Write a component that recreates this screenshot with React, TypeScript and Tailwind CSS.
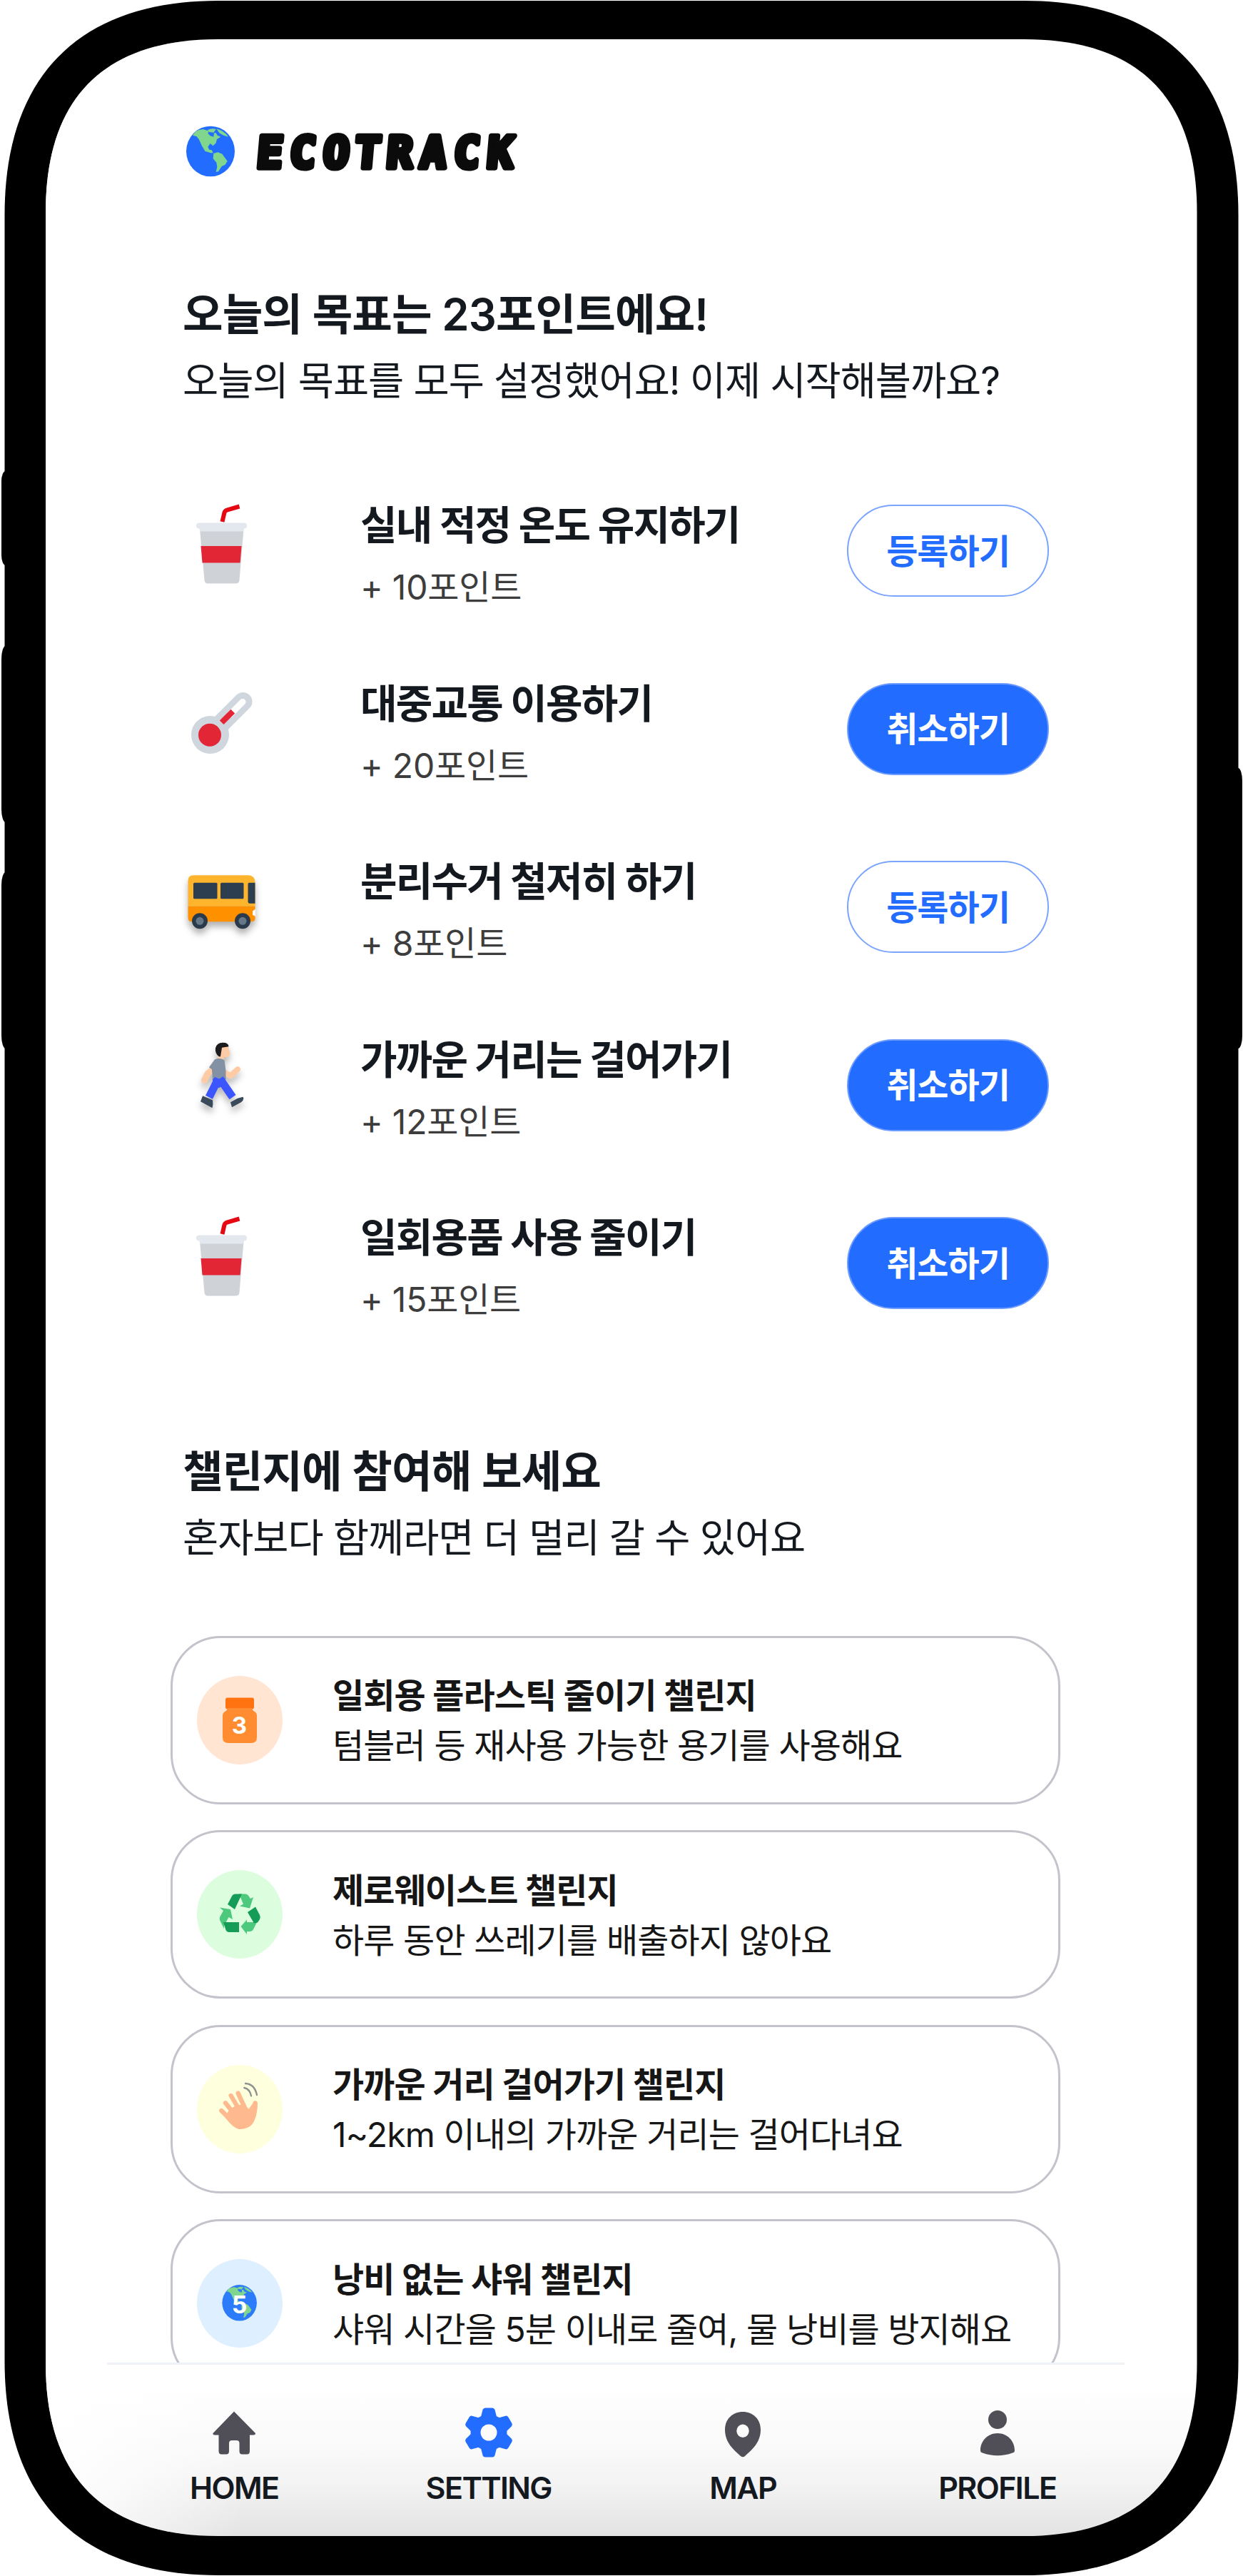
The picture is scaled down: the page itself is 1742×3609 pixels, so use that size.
import React from "react";

const INNER =
  "M64 297C64 137 146 55 306 55H1435.5C1595.5 55 1677.5 137 1677.5 297V3311C1677.5 3471 1595.5 3553 1435.5 3553H306C146 3553 64 3471 64 3311Z";
const OUTER =
  "M6.5 301C6.5 106 111.500 1 306.500 1H1435.500C1630.500 1 1735.500 106 1735.500 301V3308C1735.500 3503 1630.500 3608 1435.500 3608H306.500C111.500 3608 6.500 3503 6.500 3308Z";

function PhoneFrame() {
  return (
    <svg className="absolute inset-0" width="1742" height="3609" viewBox="0 0 1742 3609" aria-hidden="true">
      <defs>
        <linearGradient id="floor" x1="0" y1="3340" x2="0" y2="3553" gradientUnits="userSpaceOnUse">
          <stop offset="0" stopColor="#ffffff" />
          <stop offset="0.4" stopColor="#fafafa" />
          <stop offset="0.65" stopColor="#f3f3f3" />
          <stop offset="0.85" stopColor="#eaeaea" />
          <stop offset="1" stopColor="#e3e3e3" />
        </linearGradient>
        <linearGradient id="edge" x1="64" y1="0" x2="340" y2="0" gradientUnits="userSpaceOnUse">
          <stop offset="0.15" stopColor="#ffffff" stopOpacity="0.85" />
          <stop offset="1" stopColor="#ffffff" stopOpacity="0" />
        </linearGradient>
      </defs>
      <rect x="2" y="660" width="20" height="132" rx="6" ry="14" />
      <rect x="2" y="905" width="20" height="247" rx="6" ry="18" />
      <rect x="2" y="1222" width="20" height="247" rx="6" ry="18" />
      <rect x="1721" y="1076" width="20" height="393" rx="6" ry="18" />
      <path d={OUTER} fill="#000" />
      <path d={INNER} fill="url(#floor)" />
      <path d={INNER} fill="url(#edge)" />
    </svg>
  );
}

function Continents() {
  return (
    <g fill="#80d68c">
      <path d="M60 92L72 76L84 70L104 66L128 74L124 84L134 94L148 98L150 82L158 82L164 92L178 98L162 108L158 124L146 136L134 126L124 140L130 152L140 154L146 166L136 166L112 158L98 134L86 108L76 96Z" />
      <path d="M122 70Q140 60 158 66L148 80L130 78Z" />
      <path d="M160 64Q192 72 210 98L190 92L172 82Z" />
      <path d="M148 168L166 163L184 170L206 200L196 216L182 222L168 244L158 246L163 224L160 206L146 190Z" />
    </g>
  );
}

function Globe() {
  return (
    <svg width="70" height="72" viewBox="30 51 210 216" aria-hidden="true">
      <ellipse cx="135" cy="159" rx="102" ry="106" fill="#226dff" />
      <Continents />
    </svg>
  );
}

function Wordmark() {
  return (
    <svg width="400" height="84" viewBox="0 0 400 84">
      <text
        transform="skewX(-5)"
        x="14 60 107 151 196 243 290 337"
        y="65"
        fontFamily="DejaVu Sans Mono"
        fontWeight="700"
        fontSize="61"
        fill="#0b0b0b"
        stroke="#0b0b0b"
        strokeWidth="7.5"
        strokeLinejoin="round"
      >
        ECOTRACK
      </text>
    </svg>
  );
}

function Cup() {
  return (
    <svg width="116" height="116" viewBox="252 705 116 116" aria-hidden="true">
      <path d="M311.500 731L314.500 718Q315.500 715.500 318 714.700L335.500 709.500" fill="none" stroke="#e50914" strokeWidth="6" />
      <path d="M280 741H341.500L335.500 813Q335 817.500 330 817.500H291.500Q287 817.500 286.500 813Z" fill="#cfd3d8" />
      <path d="M281.500 765H338.500L336.600 788.500H283.500Z" fill="#e32636" />
      <rect x="275" y="732.500" width="71" height="8" rx="4" fill="#e3e8ee" />
      <path d="M278.500 738H342.500L340.500 744.500H280.500Z" fill="#e3e8ee" />
    </svg>
  );
}

function Thermometer() {
  return (
    <svg width="116" height="116" viewBox="252 954.600 116 116" aria-hidden="true">
      <circle cx="294.500" cy="1029" r="26.500" fill="#d0d6de" />
      <path d="M294 1029L340.500 982.500" stroke="#d0d6de" strokeWidth="26" strokeLinecap="round" />
      <path d="M322 1001L340 983" stroke="#fff" strokeWidth="9" strokeLinecap="round" />
      <circle cx="294" cy="1029.300" r="16" fill="#e32636" />
      <path d="M313.500 1009L323.500 999" stroke="#e32636" strokeWidth="8" strokeLinecap="square" />
    </svg>
  );
}

function Bus() {
  return (
    <svg className="drop-shadow-[0_7px_5px_rgba(0,0,0,0.3)]" width="116" height="116" viewBox="252 1204.200 116 116" aria-hidden="true">
      <path d="M263.500 1270V1234Q263.500 1226.500 271 1226.500H348Q357.500 1226.500 357.500 1237V1270Z" fill="#ffb42e" />
      <path d="M263.500 1270H357.500V1287Q357.500 1291.500 352 1291.500H269Q263.500 1291.500 263.500 1286Z" fill="#ff9000" />
      <rect x="271" y="1237" width="33.500" height="22.500" rx="1.500" fill="#2c3e50" />
      <rect x="309" y="1237" width="32.500" height="22.500" rx="1.500" fill="#2c3e50" />
      <path d="M357.500 1237H349Q347.500 1237 347.500 1239V1263Q347.500 1266 350 1266H357.500Z" fill="#2c3e50" />
      <path d="M358 1274L354 1276.500V1282L358 1284Z" fill="#fff" />
      <circle cx="280" cy="1290.500" r="11" fill="#2a3a4b" />
      <circle cx="340" cy="1290.500" r="11" fill="#2a3a4b" />
      <circle cx="280" cy="1290.500" r="5.500" fill="#66778a" />
      <circle cx="340" cy="1290.500" r="5.500" fill="#66778a" />
    </svg>
  );
}

function Walker() {
  return (
    <svg className="drop-shadow-[0_7px_5px_rgba(0,0,0,0.28)]" width="116" height="116" viewBox="252 1453.800 116 116" aria-hidden="true">
      <path d="M305 1468Q306 1462 313 1462Q321 1463 321 1470L322.500 1476Q321 1482 314 1481L313 1486H306Z" fill="#ffcba4" />
      <path d="M307 1480Q301 1476 302 1468Q304 1460 313 1460.500Q320 1460.500 320.500 1466L311 1467.500Q310 1474 309 1480Z" fill="#1c1c1e" />
      <path d="M301 1496L291 1504L286.500 1513" fill="none" stroke="#ffcba4" strokeWidth="9" strokeLinecap="round" strokeLinejoin="round" />
      <path d="M316 1503L323 1507L333 1498" fill="none" stroke="#ffcba4" strokeWidth="8" strokeLinecap="round" strokeLinejoin="round" />
      <path d="M301 1484Q308 1481 314.500 1485L316.500 1500V1512H298L297 1498L293 1495Z" fill="#8391a5" />
      <path d="M306 1511L293 1537" stroke="#3b55ff" strokeWidth="11" />
      <path d="M308 1511L326 1537" stroke="#3b55ff" strokeWidth="11" />
      <path d="M298 1511H316L314 1519L307 1524L298 1518Z" fill="#3b55ff" />
      <path d="M284 1535L298 1541Q299 1547 297.500 1552L281 1543Z" fill="#3b4a5a" />
      <path d="M323 1544L333 1538.500L340.500 1536.500Q343 1540 338 1544L325 1551Z" fill="#3b4a5a" />
    </svg>
  );
}

function JarBadge() {
  return (
    <svg width="120" height="124" viewBox="0 0 120 124" aria-hidden="true">
      <ellipse cx="60" cy="62" rx="60" ry="62" fill="#ffe5d2" />
      <rect x="40" y="30.500" width="40" height="16" rx="3" fill="#ff7410" />
      <path d="M43 45H77Q78 49 81 50Q84 52 84 56V86Q84 94 76 94H44Q36 94 36 86V56Q36 52 39 50Q42 49 43 45Z" fill="#ff8c30" />
      <text x="59.500" y="81" textAnchor="middle" fontFamily="Inter" fontWeight="700" fontSize="33" fill="#fff">3</text>
    </svg>
  );
}

function RecycleBadge() {
  return (
    <svg width="120" height="124" viewBox="0 0 120 124" aria-hidden="true">
      <ellipse cx="60" cy="62" rx="60" ry="62" fill="#ddfddf" />
      <g fill="#4cc97d">
        <path d="M59 33.500H68Q71 33.500 73 37L75 40L79 38L74 53.500L60 50.500L65 47.500Z" />
        <path d="M32 52.500L47 55L50 69L44.500 66L38 78L38 82L32 70Q31 67 33 64L37 57Z" />
        <path d="M61.500 79L70 69.500V73H84L79 83Q77.500 86 74 86H70V90Z" />
      </g>
      <g fill="#159d58">
        <path d="M43 48L49 36.500Q50.500 33.500 54 33.500H63L53 55Z" />
        <path d="M37 73H59V87H45Q42 87 40.500 84Z" />
        <path d="M71 59L82 51.500L88 63Q89.500 66 88 69L85 73.500L80 74.500Z" />
      </g>
    </svg>
  );
}

function WaveBadge() {
  return (
    <svg width="120" height="124" viewBox="20 158 360 372" aria-hidden="true">
      <ellipse cx="200" cy="344" rx="180" ry="186" fill="#feffdd" />
      <g fill="none" stroke="#ffb98e" strokeLinecap="round" strokeWidth="19">
        <path d="M123 350L165 392" />
        <path d="M140 318L180 368" />
        <path d="M163 287L200 350" />
        <path d="M193 277L222 340" />
        <path d="M265 318Q266 350 250 380" />
      </g>
      <path d="M138 378L152 352L180 330L216 322L238 343L256 318L275 318Q274 380 252 408Q232 430 196 428Q172 424 138 378Z" fill="#ffb98e" />
      <g fill="none" stroke="#8c918f" strokeWidth="7" strokeLinecap="round">
        <path d="M224 236Q262 238 272 284" />
        <path d="M219 254Q243 260 248 288" />
      </g>
    </svg>
  );
}

function EarthBadge() {
  return (
    <svg width="120" height="124" viewBox="0 0 120 124" aria-hidden="true">
      <ellipse cx="60" cy="62" rx="60" ry="62" fill="#deefff" />
      <g transform="translate(27.500 23.500) scale(0.238)">
        <ellipse cx="135" cy="159" rx="102" ry="106" fill="#2b7bfa" />
        <Continents />
      </g>
      <text x="59.500" y="75.500" textAnchor="middle" fontFamily="Inter" fontWeight="700" fontSize="34" fill="#fff">5</text>
    </svg>
  );
}

function HomeIcon() {
  return (
    <svg width="72" height="72" viewBox="292 3372 72 72" aria-hidden="true">
      <path d="M328 3378.500L358 3409Q358 3411.500 355 3411.500H350V3434Q350 3438.500 346 3438.500H339.500Q335.500 3438.500 335.500 3434V3423Q335.500 3419 331.500 3419H325Q321 3419 321 3423V3434Q321 3438.500 317 3438.500H310.500Q306.500 3438.500 306.500 3434V3411.500H301Q298 3411.500 298.500 3409Z" fill="#504f58" />
    </svg>
  );
}

function GearIcon() {
  return (
    <svg width="72" height="72" viewBox="-36 -36 72 72" aria-hidden="true">
      <mask id="hub">
        <rect x="-36" y="-36" width="72" height="72" fill="#fff" />
        <circle r="11.500" fill="#000" />
      </mask>
      <g mask="url(#hub)" fill="#226dff">
        <circle r="25.500" />
        <path id="tooth" d="M-5 -34.500H5Q7.500 -34.500 8.500 -32L11.500 -20V20L8.500 32Q7.500 34.500 5 34.500H-5Q-7.500 34.500 -8.500 32L-11.500 20V-20L-8.500 -32Q-7.500 -34.500 -5 -34.500Z" />
        <use href="#tooth" transform="rotate(60)" />
        <use href="#tooth" transform="rotate(120)" />
      </g>
    </svg>
  );
}

function PinIcon() {
  return (
    <svg width="72" height="72" viewBox="1005 3372 72 72" aria-hidden="true">
      <path
        fillRule="evenodd"
        d="M1041 3379C1055 3379 1066 3389 1066 3404C1066 3422 1054 3432 1044 3441Q1041 3443.500 1038 3441C1028 3432 1016 3422 1016 3404C1016 3389 1027 3379 1041 3379ZM1041 3396.500A8.700 9.200 0 1 0 1041 3415A8.700 9.200 0 1 0 1041 3396.500Z"
        fill="#504f58"
      />
    </svg>
  );
}

function PersonIcon() {
  return (
    <svg width="72" height="72" viewBox="1361 3372 72 72" aria-hidden="true">
      <circle cx="1397" cy="3390" r="13" fill="#504f58" />
      <path d="M1397 3409C1411 3409 1421 3420 1421 3433Q1421 3436 1418 3436.500Q1397 3444 1376 3436.500Q1373 3436 1373 3433C1373 3420 1383 3409 1397 3409Z" fill="#504f58" />
    </svg>
  );
}

const goals = [
  { Icon: Cup, title: "실내 적정 온도 유지하기", points: 10, active: false },
  { Icon: Thermometer, title: "대중교통 이용하기", points: 20, active: true },
  { Icon: Bus, title: "분리수거 철저히 하기", points: 8, active: false },
  { Icon: Walker, title: "가까운 거리는 걸어가기", points: 12, active: true },
  { Icon: Cup, title: "일회용품 사용 줄이기", points: 15, active: true },
];

const challenges = [
  { Badge: JarBadge, title: "일회용 플라스틱 줄이기 챌린지", text: "텀블러 등 재사용 가능한 용기를 사용해요" },
  { Badge: RecycleBadge, title: "제로웨이스트 챌린지", text: "하루 동안 쓰레기를 배출하지 않아요" },
  { Badge: WaveBadge, title: "가까운 거리 걸어가기 챌린지", text: "1~2km 이내의 가까운 거리는 걸어다녀요" },
  { Badge: EarthBadge, title: "낭비 없는 샤워 챌린지", text: "샤워 시간을 5분 이내로 줄여, 물 낭비를 방지해요" },
];

const tabs = [
  { Icon: HomeIcon, label: "HOME" },
  { Icon: GearIcon, label: "SETTING" },
  { Icon: PinIcon, label: "MAP" },
  { Icon: PersonIcon, label: "PROFILE" },
];

function SectionTitle({ title, text }: { title: string; text: string }) {
  return (
    <div className="pl-[17px] pt-[3px] text-[#14181f]">
      <h2 className="text-[61.5px] font-semibold leading-[96px] tracking-[-0.9px]">{title}</h2>
      <p className="text-[54.5px] leading-[88px] tracking-[-1px]">{text}</p>
    </div>
  );
}

export default function App() {
  return (
    <div className="relative h-[3609px] w-[1742px] overflow-hidden bg-white font-['Inter','Noto_Sans_CJK_KR',sans-serif]">
      <PhoneFrame />
      <div className="relative flex h-full flex-col">
        <main className="h-[3310px] overflow-hidden whitespace-nowrap pl-[239px] pr-[256px] pt-[170px]">
          <header className="flex h-[84px] items-center gap-5 pl-[21px]">
            <Globe />
            <Wordmark />
          </header>

          <section className="mt-[136px]">
            <SectionTitle title="오늘의 목표는 23포인트에요!" text="오늘의 목표를 모두 설정했어요! 이제 시작해볼까요?" />
            <ul className="mt-[70px] pl-[13px] pr-4">
              {goals.map(({ Icon, title, points, active }) => (
                <li key={title} className="flex h-[249.6px] items-start">
                  <div className="mt-[58px] w-[253px]">
                    <Icon />
                  </div>
                  <div className="mt-[43px] flex-1">
                    <h3 className="text-[56px] font-bold leading-[93px] tracking-[-1.8px] text-[#14181f]">{title}</h3>
                    <p className="text-[48px] leading-[80px] tracking-[-0.2px] text-[#3d3d3d]">+ {points}포인트</p>
                  </div>
                  <button
                    className={
                      active
                        ? "mt-[60px] h-[129px] w-[283px] rounded-full border-2 border-[#6d9bff] bg-[#226dff] pt-[2px] text-[48px] font-semibold leading-none tracking-[-1px] text-white"
                        : "mt-[60px] h-[129px] w-[283px] rounded-full border-2 border-[#7ba4ff] bg-white pt-[2px] text-[48px] font-semibold leading-none tracking-[-1px] text-[#226dff]"
                    }
                  >
                    {active ? "취소하기" : "등록하기"}
                  </button>
                </li>
              ))}
            </ul>
          </section>

          <section className="mt-[116px]">
            <SectionTitle title="챌린지에 참여해 보세요" text="혼자보다 함께라면 더 멀리 갈 수 있어요" />
            <ul className="mt-[94px] flex flex-col gap-[36.500px]">
              {challenges.map(({ Badge, title, text }) => (
                <li key={title} className="flex h-[236px] items-center rounded-[70px] border-[3px] border-[#c3c3cb] bg-white pl-[34px]">
                  <Badge />
                  <div className="ml-[70px] pt-[3px] text-[#161616]">
                    <h3 className="text-[48px] font-bold leading-[70px] tracking-[-0.9px]">{title}</h3>
                    <p className="text-[48px] leading-[70px] tracking-[-0.9px]">{text}</p>
                  </div>
                </li>
              ))}
            </ul>
          </section>
        </main>

        <nav className="mx-[150px] mr-[166px] grid grid-cols-4 border-t-[3px] border-[#eff3f8] pt-[59px]">
          {tabs.map(({ Icon, label }) => (
            <a key={label} className="flex flex-col items-center text-[43px] font-semibold leading-[60px] tracking-[-1.6px] text-[#14181f]">
              <Icon />
              <span className="mt-[11px]">{label}</span>
            </a>
          ))}
        </nav>
      </div>
    </div>
  );
}
